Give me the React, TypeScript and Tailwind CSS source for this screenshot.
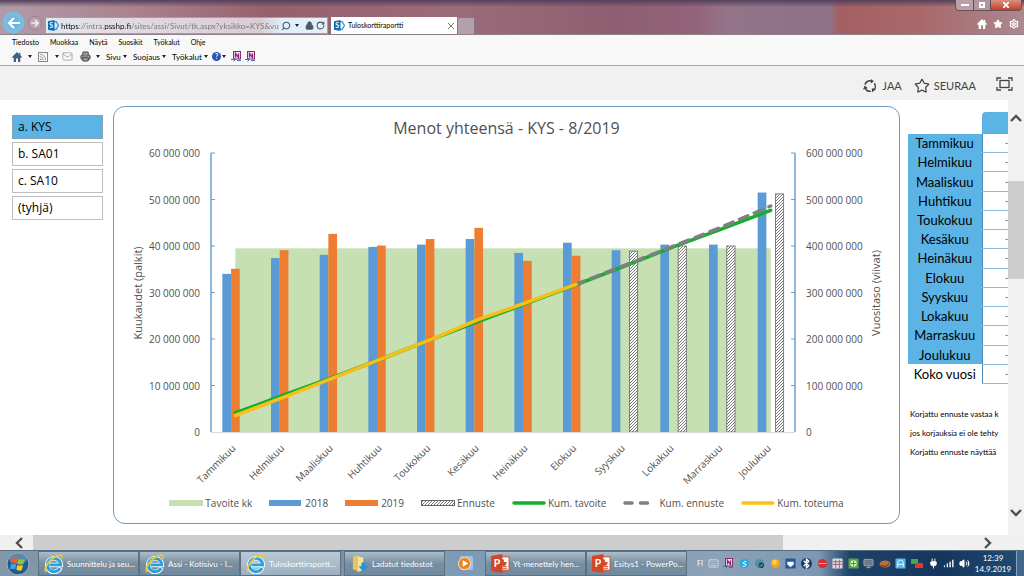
import type { ReactNode } from "react";
import { Star, Settings, Lock, RotateCw, Search, Printer, Rss, Mail, Bluetooth, Keyboard, Volume2, Monitor, Plug } from "lucide-react";

const MONTHS = [
  "Tammikuu", "Helmikuu", "Maaliskuu", "Huhtikuu", "Toukokuu", "Kesäkuu",
  "Heinäkuu", "Elokuu", "Syyskuu", "Lokakuu", "Marraskuu", "Joulukuu",
];

// monthly bars, millions
const Y2018 = [34, 37.4, 38.1, 39.8, 40.3, 41.5, 38.5, 40.7, 39.1, 40.3, 40.3, 51.5];
const Y2019 = [35.1, 39.1, 42.6, 40.1, 41.5, 43.9, 36.8, 37.9];
const FORECAST = [38.9, 40, 40, 51.2];

// cumulative lines, tens of millions
const CUM_TARGET = [4.1, 7.97, 11.75, 15.7, 19.8, 23.8, 27.7, 31.65, 35.7, 39.8, 43.7, 47.65];
const CUM_ACTUAL = [3.55, 7.5, 11.6, 15.7, 19.8, 24.2, 27.9, 31.75];
const CUM_FORECAST = [31.75, 35.85, 39.95, 44.1, 48.6];

const LEFT = 97;
const RIGHT = 681;
const TOP = 13;
const BOTTOM = 292;
const STEP = (RIGHT - LEFT) / 12;

const cx = (i: number) => LEFT + STEP * (i + 0.5);
const cy = (v: number) => BOTTOM - (v / 60) * (BOTTOM - TOP);
const points = (values: number[], from = 0) =>
  values.map((v, i) => `${cx(i + from)},${cy(v)}`).join(" ");

export default function App() {
  return (
    <div className="flex h-screen flex-col overflow-hidden bg-white font-['Lato','Open_Sans',sans-serif] text-black">
      <TitleBar />
      <MenuBars />
      <Ribbon />
      <div className="flex min-h-0 flex-1">
        <main className="flex min-w-0 flex-1 items-start overflow-hidden">
          <UnitList />
          <ChartPanel />
          <MonthTable />
        </main>
        <div className="flex w-4 shrink-0 flex-col items-center bg-[#f1f1f1] pt-[13px]">
          <Chevron d="M1 8 6 3l5 5" />
          <div className="mt-14 h-[98px] w-full bg-[#cdcdcd]" />
          <div className="flex-1" />
          <Chevron d="M1 3l5 5 5-5" />
          <div className="h-4" />
        </div>
      </div>
      <div className="flex h-[15px] shrink-0 items-center bg-[#f0f0f0] pl-[14px] pr-[30px]">
        <Chevron d="M8 1 3 6l5 5" />
        <div className="ml-[7px] flex h-full flex-1 items-center">
          <div className="h-full w-[79%] bg-[#cdcdcd]" />
        </div>
        <Chevron d="M3 1l5 5-5 5" />
      </div>
      <Taskbar />
    </div>
  );
}

function Chevron({ d }: { d: string }) {
  return (
    <svg viewBox="0 0 12 12" className="size-3 shrink-0" fill="none" stroke="#505050" strokeWidth="2.4">
      <path d={d} />
    </svg>
  );
}

function SharePointIcon() {
  return (
    <svg viewBox="0 0 11 11" className="size-[11px] shrink-0">
      <path d="M6 2l2-.5L10.500 5.500 8 9.500 6 9" fill="none" stroke="#2a8dd4" strokeWidth="1.200" />
      <path d="M0 1.200 6.500 0v11L0 9.800z" fill="#0a6cbd" />
      <text x="1.300" y="8" fontSize="7" fontWeight="700" fill="#fff">S</text>
    </svg>
  );
}

function HouseIcon({ className }: { className: string }) {
  return (
    <svg viewBox="0 0 10 10" className={className} fill="currentColor">
      <path d="M5 0 0 5l1 1 .7-.6V10h2.300V6.500h2V10h2.300V5.400L9 6l1-1-1.700-1.700V1H7v1z" />
    </svg>
  );
}

function TitleBar() {
  return (
    <header className="flex h-[35px] shrink-0 items-end border-b border-[#8c7f88] bg-[linear-gradient(180deg,#54405c_0,#54405c00_7px),linear-gradient(90deg,#b29ba8_0%,#a9808c_14%,#96606c_26%,#9c6b7a_45%,#8d5f70_60%,#93647a_68%,#937489_71%,#8d7187_81%,#a35f62_82%,#a9696a_90%,#ab8890_100%)]">
      <div className="flex w-[45px] shrink-0 items-center gap-[3px] pl-[2px]">
        <button aria-label="Takaisin" className="flex size-[23px] items-center justify-center rounded-full border border-[#8fa9bd] bg-[radial-gradient(circle,#5fb0dc,#8fc5e2)]">
          <svg viewBox="0 0 16 16" className="size-4" fill="none" stroke="#fff" strokeWidth="2.200">
            <path d="M14 8H3M8 3 3 8l5 5" />
          </svg>
        </button>
        <button aria-label="Eteenpäin" className="flex size-[14px] items-center justify-center rounded-full border border-[#97808f] bg-[#b9a3b0]">
          <svg viewBox="0 0 16 16" className="size-[10px]" fill="none" stroke="#eee" strokeWidth="2.500">
            <path d="M2 8h11M8 3l5 5-5 5" />
          </svg>
        </button>
      </div>
      <div className="flex h-[17px] w-[283px] shrink-0 items-center border border-[#8aa6c6] bg-[linear-gradient(90deg,#dfeaf3,#e3dfe6_15%,#d9ccd5_76%,#dfeefa_84%,#e4f0fa)] pl-[2px] text-[#4a5660]">
        <SharePointIcon />
        <input
          aria-label="Osoite"
          readOnly
          defaultValue="https://intra.psshp.fi/sites/assi/Sivut/tk.aspx?yksikko=KYS&vuosi"
          className="ml-[2px] h-full w-[222px] min-w-0 bg-[linear-gradient(90deg,#111_0_18px,#777_18px_43px,#111_43px_70px,#777_70px)] bg-clip-text text-[8px] text-transparent outline-none"
        />
        <Search className="ml-[2px] size-[10px] shrink-0 -scale-x-100" strokeWidth={2.5} />
        <span className="mx-[4px]"><Arrow /></span>
        <Lock className="ml-[2px] size-[9px] shrink-0" fill="currentColor" />
        <RotateCw className="ml-[2px] mr-[2px] size-[9px] shrink-0" strokeWidth={2.8} />
      </div>
      <div className="ml-[3px] flex h-[17px] w-[126px] shrink-0 items-center gap-[3px] bg-white px-[3px] text-[7px]">
        <SharePointIcon />
        <span className="flex-1">Tuloskorttiraportti</span>
        <button aria-label="Sulje välilehti">
          <svg viewBox="0 0 6 6" className="size-[6px]" stroke="#777"><path d="M0 0l6 6M6 0 0 6" /></svg>
        </button>
      </div>
      <button aria-label="Uusi välilehti" className="h-[17px] w-[18px] shrink-0 border border-b-0 border-[#8a7384] bg-[#b49fac]" />
      <div className="flex h-full flex-1 flex-col items-end justify-between">
        <div className="mr-[2px] flex h-[11px] overflow-hidden rounded-b-sm border border-t-0 border-[#6b4f58] text-white">
          <button aria-label="Pienennä" className="flex w-[18px] items-center justify-center border-r border-[#6b4f58] bg-[#b99fa6]">
            <span className="h-[2px] w-2 bg-white" />
          </button>
          <button aria-label="Palauta" className="flex w-[17px] items-center justify-center border-r border-[#6b4f58] bg-[#b0969e]">
            <span className="size-[6px] border-2 border-white" />
          </button>
          <button aria-label="Sulje" className="flex w-[30px] items-center justify-center bg-[linear-gradient(#dc8f80,#c23f28)]">
            <svg viewBox="0 0 6 6" className="size-[6px]" stroke="#fff" strokeWidth="1.700"><path d="M0 0l6 6M6 0 0 6" /></svg>
          </button>
        </div>
        <div className="mb-[5px] mr-[5px] flex gap-[6px] text-white">
          <HouseIcon className="size-[10px]" />
          <Star className="size-[10px]" fill="currentColor" />
          <Settings className="size-[10px]" strokeWidth={3} />
        </div>
      </div>
    </header>
  );
}

function MenuBars() {
  return (
    <nav className="flex h-[31px] shrink-0 flex-col border-b border-[#a5a5a5] bg-[#f8f8f8] pl-3">
      <div className="flex h-[14px] items-center gap-[11px] text-[7px]">
        {["Tiedosto", "Muokkaa", "Näytä", "Suosikit", "Työkalut", "Ohje"].map((m) => (
          <button key={m}>{m}</button>
        ))}
      </div>
      <div className="flex h-[15px] items-center text-[8px]">
        <button aria-label="Aloitussivu" className="flex w-[26px] items-center justify-between pr-[6px]">
          <HouseIcon className="size-[10px] text-[#3f6187]" /> <Arrow />
        </button>
        <button aria-label="Syötteet" className="flex w-[24px] items-center justify-between pr-[3px] text-[#777]">
          <Rss className="size-[10px] border border-[#888]" /> <Arrow />
        </button>
        <button aria-label="Lue sähköposti" className="w-[18px] text-[#aaa]"><Mail className="size-[11px]" /></button>
        <button aria-label="Tulosta" className="flex w-[26px] items-center justify-between pr-[6px]">
          <Printer className="size-[11px] text-[#444]" fill="#999" /> <Arrow />
        </button>
        <button className="flex w-[27px] items-center gap-[2px]">Sivu <Arrow /></button>
        <button className="flex w-[39px] items-center gap-[2px]">Suojaus <Arrow /></button>
        <button className="flex w-[40px] items-center gap-[2px]">Työkalut <Arrow /></button>
        <button aria-label="Ohje" className="flex w-[19px] items-center gap-px">
          <span className="flex size-[9px] items-center justify-center rounded-full bg-[#2853b5] text-[7px] font-bold text-white">?</span>
          <Arrow />
        </button>
        <button aria-label="Lähetä OneNoteen" className="w-[14px]"><OneNote /></button>
        <button aria-label="Linkitetyt muistiinpanot" className="w-[14px]"><OneNote /></button>
      </div>
    </nav>
  );
}

function Arrow() {
  return (
    <svg viewBox="0 0 4 3" className="h-[3px] w-1 shrink-0" fill="#222">
      <path d="M0 0h4L2 3z" />
    </svg>
  );
}

function OneNote() {
  return (
    <svg viewBox="0 0 11 11" className="size-[11px] shrink-0">
      <rect x="2.500" y=".5" width="7" height="7.500" fill="#f2dcec" stroke="#8b2a76" />
      <path d="M4.500 6.500v-4l3 4v-4" fill="none" stroke="#8b2a76" strokeWidth="1.300" />
      <path d="M0 8.500h4M2.500 6.500l2 2-2 2M6 9.500h4" fill="none" stroke="#476db3" />
    </svg>
  );
}

function Ribbon() {
  return (
    <div className="flex h-[34px] shrink-0 items-center justify-end bg-[#f1f1f1] pr-[11px] pt-[6px] text-[11px] text-[#444]">
      <button className="flex items-center gap-[5px]">
        <svg viewBox="0 0 16 16" className="size-[14px]" fill="none" stroke="#444" strokeWidth="1.700">
          <path d="M2.200 6.500A6 6 0 0 1 9.500 2.200M13 4.800A6 6 0 0 1 12 12.800M9 14A6 6 0 0 1 2.500 10.500" />
          <path d="M9 0l3.500 2.500L9 5zM15 11.500l-4.500 3.700-.5-4.500zM0 12l2-4.500 3.500 3z" fill="#444" stroke="none" />
        </svg>
        JAA
      </button>
      <button className="ml-3 flex items-center gap-1">
        <Star className="size-4" strokeWidth={1.8} />
        SEURAA
      </button>
      <button aria-label="Keskity sisältöön" className="mb-1 ml-5">
        <svg viewBox="0 0 17 14" className="h-[14px] w-[17px]" fill="none" stroke="#444" strokeWidth="1.300">
          <path d="M1 4V1h4M12 1h4v3M16 10v3h-4M5 13H1v-3" />
          <rect x="4" y="3.500" width="9" height="7" />
        </svg>
      </button>
    </div>
  );
}

function UnitList() {
  return (
    <div className="flex w-[113px] shrink-0 flex-col gap-[3px] pl-3 pr-[10px] pt-[15px] text-[12px] font-['Open_Sans','Noto_Sans',sans-serif]">
      {["a. KYS", "b. SA01", "c. SA10", "(tyhjä)"].map((unit, i) => (
        <button
          key={unit}
          className={
            i === 0
              ? "h-6 border border-[#8aa3b3] bg-[#5bb4e5] pl-[5px] text-left"
              : "h-6 border border-[#bfbfbf] bg-white pl-[5px] text-left"
          }
        >
          {unit}
        </button>
      ))}
    </div>
  );
}

function ChartPanel() {
  return (
    <section className="mt-[6px] min-w-0 flex-1 rounded-xl border border-[#6c9ac6] pb-[13px] text-[#505050] font-['Open_Sans','Noto_Sans',sans-serif]">
      <h2 className="pt-[9px] text-center text-[16px] leading-6">Menot yhteensä - KYS - 8/2019</h2>
      <Chart />
      <div className="flex justify-center gap-[17px] text-[10px] leading-[14px]">
        <LegendItem label="Tavoite kk"><rect y="3" width="34" height="6" fill="#c6e0b4" /></LegendItem>
        <LegendItem label="2018"><rect y="3" width="32" height="6" fill="#5b9bd5" /></LegendItem>
        <LegendItem label="2019"><rect y="3" width="33" height="6" fill="#ed7d31" /></LegendItem>
        <LegendItem label="Ennuste"><rect x=".5" y="3.500" width="33" height="5" fill="url(#hatch)" stroke="#666" /></LegendItem>
        <LegendItem label="Kum. tavoite"><path d="M2 6h30" stroke="#12b02a" strokeWidth="3.500" strokeLinecap="round" /></LegendItem>
        <LegendItem label="Kum. ennuste"><path d="M2 6h31" stroke="#7f7f7f" strokeWidth="3.500" strokeDasharray="7 8.500" strokeLinecap="round" /></LegendItem>
        <LegendItem label="Kum. toteuma"><path d="M2 6h30" stroke="#ffc010" strokeWidth="3.500" strokeLinecap="round" /></LegendItem>
      </div>
    </section>
  );
}

function LegendItem({ label, children }: { label: string; children: ReactNode }) {
  return (
    <div className="flex items-center gap-[2px] whitespace-nowrap">
      <svg viewBox="0 0 34 12" className="h-3 w-[34px]">{children}</svg>
      {label}
    </div>
  );
}

function Chart() {
  const ticks = [0, 10, 20, 30, 40, 50, 60];
  return (
    <svg viewBox="0 0 785 356" className="block w-full" fontSize="10" fill="#505050">
      <defs>
        <pattern id="hatch" width="3" height="3" patternUnits="userSpaceOnUse">
          <rect width="3" height="3" fill="#fff" />
          <path d="M-1 1 1-1M0 3 3 0M2 4 4 2" stroke="#555" strokeWidth=".8" />
        </pattern>
      </defs>
      <rect x={cx(0)} y={cy(39.5)} width={STEP * 11} height={BOTTOM - cy(39.5)} fill="#c6e0b4" />
      {Y2018.map((v, i) => (
        <rect key={i} x={cx(i) - 13} y={cy(v)} width="8.700" height={BOTTOM - cy(v)} fill="#5b9bd5" />
      ))}
      {Y2019.map((v, i) => (
        <rect key={i} x={cx(i) - 4.3} y={cy(v)} width="8.700" height={BOTTOM - cy(v)} fill="#ed7d31" />
      ))}
      {FORECAST.map((v, i) => (
        <rect key={i} x={cx(i + 8) + 4.8} y={cy(v)} width="8.200" height={BOTTOM - cy(v)} fill="url(#hatch)" stroke="#666" strokeWidth=".8" />
      ))}
      <path d={`M${LEFT} ${BOTTOM + 0.5}H${RIGHT}`} stroke="#d9d9d9" />
      <path d={`M${LEFT} ${TOP}V${BOTTOM}M${RIGHT} ${TOP}V${BOTTOM}`} stroke="#6c9fd0" strokeWidth="1.500" />
      {ticks.map((t) => (
        <g key={t}>
          {t > 0 && <path d={`M${LEFT} ${cy(t)}h4M${RIGHT} ${cy(t)}h-4`} stroke="#6c9fd0" />}
          <text x={LEFT - 11} y={cy(t) + 4} textAnchor="end">{t ? `${t} 000 000` : "0"}</text>
          <text x={RIGHT + 11} y={cy(t) + 4}>{t ? `${t}0 000 000` : "0"}</text>
        </g>
      ))}
      <g fill="none" strokeWidth="3.500" strokeLinecap="round" strokeLinejoin="round">
        <polyline points={points(CUM_TARGET)} stroke="#12b02a" />
        <polyline points={points(CUM_FORECAST, 7)} stroke="#7f7f7f" strokeDasharray="9 7" />
        <polyline points={points(CUM_ACTUAL)} stroke="#f7bf17" />
      </g>
      {MONTHS.map((m, i) => (
        <text key={m} textAnchor="end" transform={`translate(${cx(i) + 1} ${BOTTOM + 17}) rotate(-45)`}>{m}</text>
      ))}
      <text textAnchor="middle" fontSize="11" transform="translate(28 153) rotate(-90)">Kuukaudet (palkit)</text>
      <text textAnchor="middle" fontSize="11" transform="translate(766 153) rotate(-90)">Vuositaso (viivat)</text>
    </svg>
  );
}

function MonthTable() {
  return (
    <aside className="w-[108px] shrink-0 pl-2 pt-3">
      <table className="h-[272px] w-full table-fixed border-collapse text-center text-[13px] leading-4">
        <thead>
          <tr className="h-[22px]">
            <td className="w-[74px] p-0" />
            <th className="rounded-tl bg-[#5bb4e5] p-0" />
          </tr>
        </thead>
        <tbody>
          {[...MONTHS, "Koko vuosi"].map((m, i) => (
            <tr key={m}>
              <th className={i < 12 ? "bg-[#5bb4e5] p-0 font-normal" : "p-0 font-normal"}>{m}</th>
              <td className="border-b border-l border-b-[#8fbbdc] border-l-[#4d87b8] p-0 text-right text-[8px]">-</td>
            </tr>
          ))}
        </tbody>
      </table>
      <div className="pl-[2px] pt-[21px] text-[8px] leading-[19px] whitespace-nowrap">
        <p>Korjattu ennuste vastaa k</p>
        <p>jos korjauksia ei ole tehty</p>
        <p>Korjattu ennuste näyttää</p>
      </div>
    </aside>
  );
}

function IeLogo() {
  return (
    <svg viewBox="0 0 22 22" className="size-5 shrink-0" fill="none">
      <path d="M18 15A7.500 7.500 0 1 1 18.500 12H6" stroke="#f2f8fc" strokeWidth="5" />
      <path d="M17.500 15.500A7.300 7.300 0 1 1 18.300 12H6" stroke="#27a0dc" strokeWidth="3.200" />
      <path d="M2.500 20C-1 16 6 5 14.500 2c4-1.500 6-.5 5 3" stroke="#f4c82c" strokeWidth="1.900" />
    </svg>
  );
}

function PowerPointLogo() {
  return (
    <svg viewBox="0 0 20 20" className="size-[19px] shrink-0">
      <rect x="9" y="3" width="10" height="14" fill="#fff" stroke="#d24726" />
      <path d="M13 6a3 3 0 1 0 3 3h-3zM12 13h5M12 15h5" fill="#d24726" stroke="#d24726" />
      <path d="M0 2 12 0v20L0 18z" fill="#d24726" />
      <text x="3" y="14" fontSize="11" fontWeight="700" fill="#fff">P</text>
    </svg>
  );
}

function FolderIcon() {
  return (
    <svg viewBox="0 0 20 20" className="size-[19px] shrink-0">
      <path d="M3 3 8 1v17l-5-2z" fill="#e6c75b" />
      <path d="M8 2l6 2v13l-6 2z" fill="#f7e49a" />
      <path d="M12 9h4v4h3l-5 6-5-6h3z" fill="#2691dd" />
    </svg>
  );
}

function TaskButton({ icon, label, active }: { icon: ReactNode; label: string; active?: boolean }) {
  return (
    <button
      className={
        active
          ? "flex h-full w-[101px] min-w-0 items-center gap-[3px] border border-[#5c7080] bg-[linear-gradient(#b9c8d4,#9db0c0)] pl-[5px] text-[#f8fbff]"
          : "flex h-full w-[101px] min-w-0 items-center gap-[3px] border border-[#5b7081] bg-[linear-gradient(#aabdca,#788fa2_50%,#71899d)] pl-[5px] text-white"
      }
    >
      {icon}
      <span className="whitespace-nowrap">{label}</span>
    </button>
  );
}

function Taskbar() {
  return (
    <footer className="flex h-[26px] shrink-0 items-center overflow-hidden border-t border-[#566b7d] bg-[linear-gradient(90deg,#8297a9_0%,#7890a4_45%,#8ba2b7_70%,#7d97b1_80%,#1f4269_83%,#15365c_92%,#214c75_100%)] text-[8px]">
      <button aria-label="Käynnistä" className="ml-[6px] shrink-0">
        <svg viewBox="0 0 24 24" className="size-6">
          <circle cx="12" cy="12" r="11" fill="#265b87" stroke="#9ab9cf" />
          <ellipse cx="12" cy="7" rx="9" ry="5" fill="#6f9ebd" opacity=".7" />
          <path d="M6 7q3-2 5.500-.5l-1 5Q8 10 5 11.500z" fill="#ee5a28" />
          <path d="M12.500 7q3 1.500 6 0l-1.200 5q-3 1.500-5.700 0z" fill="#8cc63f" />
          <path d="M4.800 12.500q3-1.500 5.400 0l-1 5q-2.500-1.500-5 0z" fill="#37a5e8" />
          <path d="M11.300 13q2.500 1.500 5.700 0l-1.200 5q-3 1.500-5.500-.5z" fill="#fcc72b" />
        </svg>
      </button>
      <div className="ml-2 flex h-full shrink-0">
        <TaskButton icon={<IeLogo />} label="Suunnittelu ja seu..." />
        <TaskButton icon={<IeLogo />} label="Assi - Kotisivu - I..." />
        <TaskButton icon={<IeLogo />} label="Tuloskorttiraportt..." active />
      </div>
      <div className="ml-[3px] flex h-full shrink-0">
        <TaskButton icon={<FolderIcon />} label="Ladatut tiedostot" />
        <button aria-label="Mediasoitin" className="flex w-[40px] items-center justify-center bg-[#7f9ab3]">
          <svg viewBox="0 0 18 18" className="size-[17px]">
            <rect x="3" y="1" width="14" height="15" rx="2" fill="#9cc3e4" />
            <circle cx="8" cy="9" r="6.500" fill="#f08321" stroke="#f7e6d5" />
            <path d="M6 5.500 12 9l-6 3.500z" fill="#fff" />
          </svg>
        </button>
        <TaskButton icon={<PowerPointLogo />} label="Yt-menettely hen..." />
        <TaskButton icon={<PowerPointLogo />} label="Esitys1 - PowerPo..." />
      </div>
      <div className="ml-[10px] flex min-w-0 flex-1 items-center justify-between text-white">
        <span className="text-[7px]">FI</span>
        <Keyboard className="size-[11px] text-[#d5dbe0]" />
        <OneNote />
        <TrayDot fill="#26a9e0"><path d="M8 4H5.500L4 5.500l4 1.500-1.500 2H4" fill="none" stroke="#fff" /></TrayDot>
        <TrayDot fill="#4d93a8"><circle cx="8" cy="8" r="3" fill="#263f55" /><path d="M6.500 8l1 1 2-2" fill="none" stroke="#9fe1ef" /></TrayDot>
        <TrayDot fill="#f6a21f"><circle cx="5" cy="4.500" r="2.500" fill="#ffd256" /></TrayDot>
        <TrayBox fill="#25569d"><path d="M2.500 4h7v3L6 10 2.500 7z" fill="#fff" /></TrayBox>
        <Bluetooth className="size-[11px] rounded-full bg-[#193f75]" strokeWidth={3} />
        <TrayDot fill="#d72e2f"><path d="M2 6h8" stroke="#ffb3a8" /></TrayDot>
        <TrayBox fill="#d9dce2"><path d="M1 4h10M1 7h10M4 2v9M8 2v9" stroke="#b0536c" /></TrayBox>
        <TrayBox fill="#55a83e"><circle cx="6" cy="6" r="3.500" fill="#d8f0c5" /><path d="M6 3v6M3 6h6" stroke="#3e8c2b" /></TrayBox>
        <Monitor className="size-[11px] text-[#9ba5ae]" fill="#6d7a85" />
        <svg viewBox="0 0 12 12" className="size-3 shrink-0"><ellipse cx="6" cy="6" rx="5.500" ry="3.500" fill="#b7713c" /><path d="M2 7q4 3 8-1" fill="none" stroke="#5d3316" /></svg>
        <TrayBox fill="#58b5e4"><path d="M3 10V4l3-2 3 2v6M2 7h8" fill="none" stroke="#e7f7ff" /></TrayBox>
        <svg viewBox="0 0 12 12" className="size-3 shrink-0"><path d="M0 1h7v5H0z" fill="#47a845" /><path d="M4 5h8v5H4z" fill="#db3b2c" /></svg>
        <Plug className="size-[11px]" fill="currentColor" />
        <svg viewBox="0 0 12 12" className="size-[11px] shrink-0" fill="#fff"><path d="M1 8h1v2H1zM4 6h1.500v4H4zM7 4h1.500v6H7zM10 2h1.500v8H10z" /></svg>
        <Volume2 className="size-[11px]" fill="currentColor" />
      </div>
      <div className="w-[46px] shrink-0 text-center text-[8px] leading-[11px] text-white">
        <div>12:39</div>
        <div>14.9.2019</div>
      </div>
      <button aria-label="Näytä työpöytä" className="h-full w-2 shrink-0 border-l border-[#86a5bd] bg-[#41688b]" />
    </footer>
  );
}

function TrayDot({ fill, children }: { fill: string; children?: ReactNode }) {
  return (
    <svg viewBox="0 0 12 12" className="size-[11px] shrink-0">
      <circle cx="6" cy="6" r="5" fill={fill} />
      {children}
    </svg>
  );
}

function TrayBox({ fill, children }: { fill: string; children?: ReactNode }) {
  return (
    <svg viewBox="0 0 12 12" className="size-[11px] shrink-0">
      <rect x=".5" y=".5" width="11" height="11" rx="1" fill={fill} />
      {children}
    </svg>
  );
}
